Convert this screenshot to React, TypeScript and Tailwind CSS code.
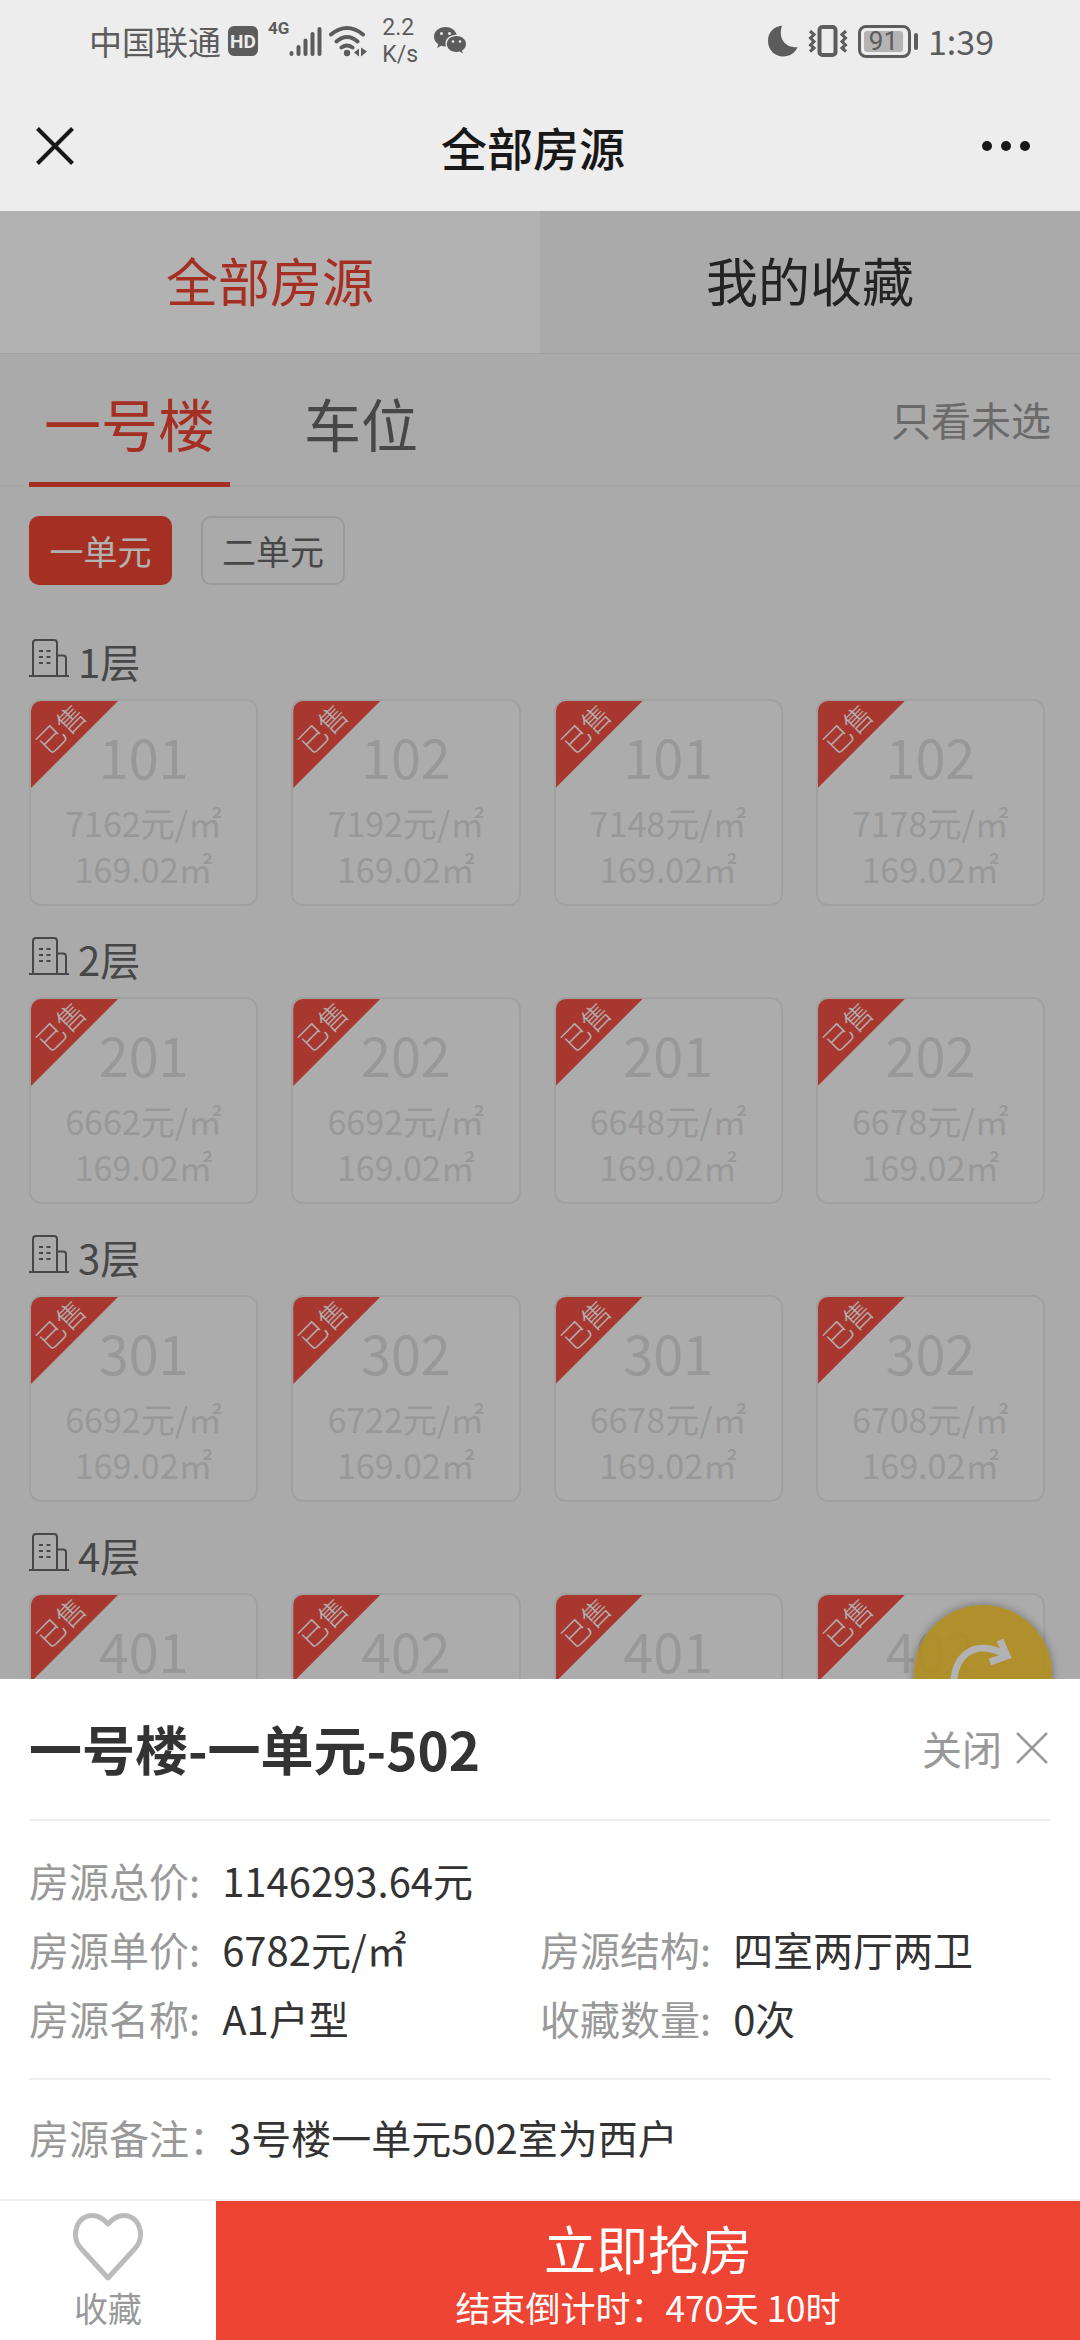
/* 房源选择页：楼层房源列表，遮罩之上弹出单个房源的详情面板。 */

import { useState } from "react";

type Room = { no: string; price: number };

const floors: { name: string; rooms: Room[] }[] = [
  {
    name: "1层",
    rooms: [
      { no: "101", price: 7162 },
      { no: "102", price: 7192 },
      { no: "101", price: 7148 },
      { no: "102", price: 7178 },
    ],
  },
  {
    name: "2层",
    rooms: [
      { no: "201", price: 6662 },
      { no: "202", price: 6692 },
      { no: "201", price: 6648 },
      { no: "202", price: 6678 },
    ],
  },
  {
    name: "3层",
    rooms: [
      { no: "301", price: 6692 },
      { no: "302", price: 6722 },
      { no: "301", price: 6678 },
      { no: "302", price: 6708 },
    ],
  },
  {
    name: "4层",
    rooms: [
      { no: "401", price: 6722 },
      { no: "402", price: 6752 },
      { no: "401", price: 6708 },
      { no: "402", price: 6738 },
    ],
  },
];

function StatusBar() {
  return (
    <div className="flex h-[86px] items-center justify-between pr-[86px] pb-[4px] pl-[89px] text-[#5c5c5c]">
      <div className="flex items-center">
        <span className="text-[33px] leading-[48px]">中国联通</span>
        <span className="ml-[7px] flex h-[30px] w-[30px] items-center justify-center rounded-[6px] bg-[#5c5c5c] font-['Roboto'] text-[19px] leading-none font-bold text-[#ededed]">
          HD
        </span>
        <span className="ml-[10px] self-start pt-[4px] font-['Roboto'] text-[17px] leading-[20px] font-bold">
          4G
        </span>
        <svg viewBox="0 0 34 32" className="h-[32px] w-[34px]" stroke="currentColor" strokeWidth="4" strokeLinecap="round">
          <path d="M2.5 28v1M9.500 22v7M16.500 15.500v13.500M23.500 9v20M30.500 4v25" />
        </svg>
        <svg viewBox="0 0 40 32" className="ml-[6px] h-[32px] w-[40px]" fill="none" stroke="currentColor" strokeWidth="4" strokeLinecap="round">
          <path d="M2 9.500Q18 -3.500 34 9.500M7.500 16.500Q18 7.500 28.500 16.500M12.500 22.500Q18 18.500 23.500 22.500" />
          <circle cx="18" cy="28" r="3.200" fill="currentColor" stroke="none" />
          <path d="M25 27.500l5-4v8zM32 22.500l6 4-6 5z" fill="currentColor" stroke="none" />
        </svg>
        <span className="ml-[13px] font-['Roboto'] text-[23px] leading-[27px]">
          2.2
          <br />
          K/s
        </span>
        <svg viewBox="0 0 34 28" className="ml-[16px] h-[28px] w-[34px]" fill="currentColor">
          <path d="M11.500 0C5 0 0 4.300 0 9.800c0 3.100 1.700 5.800 4.300 7.500L3.200 21l4-2.200c1.300.4 2.800.6 4.300.6h.5a8 8 0 0 1-.5-2.800c0-5 4.800-8.800 10.500-8.800h.8C21.600 3.200 17 0 11.500 0Z" />
          <path d="M32 17.100c0-4.500-4.400-8-9.600-8-5.400 0-9.600 3.600-9.600 8s4.200 8 9.600 8c1.200 0 2.300-.2 3.300-.5l3.100 2-.8-3c2.500-1.600 4-3.900 4-6.500Z" />
          <g fill="#ededed">
            <circle cx="7.500" cy="6.500" r="1.500" />
            <circle cx="15.500" cy="6.500" r="1.500" />
            <circle cx="19" cy="14.500" r="1.300" />
            <circle cx="26" cy="14.500" r="1.300" />
          </g>
        </svg>
      </div>
      <div className="flex items-center">
        <svg viewBox="0 0 30 32" className="h-[32px] w-[30px]" fill="currentColor">
          <path d="M14 0.500C5 1.500 0 8 0 16c0 9 7 15.500 15 15.500 7 0 12.500-4 14.500-9.500C19 23.500 9.500 15 14 0.500Z" />
        </svg>
        <svg viewBox="0 0 40 32" className="ml-[10px] h-[32px] w-[40px]" fill="none" stroke="currentColor" strokeWidth="3">
          <rect x="11.500" y="2" width="16" height="28" rx="3" strokeWidth="4" />
          <path d="M2 6l4 3.500-3.500 3.500L6 16.500 2.500 20 6 23 2 26.500M38 6l-4 3.500 3.500 3.500L34 16.500l3.500 3.500L34 23l4 3.500" />
        </svg>
        <span className="ml-[10px] flex h-[33px] w-[53px] rounded-[8px] border-3 border-current p-[3px]">
          <span className="flex w-[39px] items-center justify-center rounded-[3px] bg-[#b4b4b4] font-['Roboto'] text-[26px] leading-none">
            91
          </span>
        </span>
        <span className="ml-[3px] h-[17px] w-[4px] rounded-[2px] bg-current" />
        <span className="ml-[10px] text-[34px] leading-[48px]">1:39</span>
      </div>
    </div>
  );
}

function BuildingIcon() {
  return (
    <svg viewBox="0 0 40 38" className="mb-[6px] h-[38px] w-[40px]" fill="none" stroke="#666" strokeWidth="2">
      <path d="M0 37h40M4 37V4q0-3 3-3h18q3 0 3 3v33M28 16.500h6q3 0 3 3V37" />
      <path d="M10 12h4M17.500 12h4M10 18h4M17.500 18h4M10 24h4M17.500 24h4" />
    </svg>
  );
}

function RoomCard({ room }: { room: Room }) {
  return (
    <button
      type="button"
      className="relative flex h-[207px] flex-col items-center overflow-hidden rounded-[12px] border-2 border-[#e6e6e6] bg-[#f7f7f7] pt-[25px] text-[#dadada]"
    >
      <span className="absolute top-0 left-0 h-[87px] w-[87px] bg-[#f15045] [clip-path:polygon(0_0,100%_0,0_100%)]" />
      <span className="absolute top-[10px] left-0 w-[58px] -rotate-45 text-center text-[28px] leading-[34px] font-light text-white">
        已售
      </span>
      <span className="text-[54px] leading-[60px]">{room.no}</span>
      <span className="mt-[14px] text-[34px] leading-[46px]">{room.price}元/㎡</span>
      <span className="text-[34px] leading-[46px]">169.02㎡</span>
    </button>
  );
}

function Field({ label, value }: { label: string; value: string }) {
  return (
    <div className="flex gap-[22px]">
      <dt className="text-[#999]">{label}:</dt>
      <dd>{value}</dd>
    </div>
  );
}

export default function App() {
  const [saved, setSaved] = useState(false);

  return (
    <div className="relative flex h-screen flex-col overflow-hidden bg-[#f4f4f4] font-['Noto_Sans_CJK_SC',sans-serif] text-[#333]">
      <header className="shrink-0 bg-[#ededed]">
        <StatusBar />
        <div className="flex h-[125px] items-center justify-between pr-[50px] pb-[6px] pl-[36px] text-[#181818]">
          <button type="button" aria-label="返回" className="w-[48px]">
            <svg viewBox="0 0 38 38" className="h-[38px] w-[38px]" stroke="currentColor" strokeWidth="4">
              <path d="M1.500 1.500l35 35M36.500 1.500l-35 35" />
            </svg>
          </button>
          <h1 className="text-[46px] leading-[60px] font-medium">全部房源</h1>
          <button type="button" aria-label="更多" className="w-[48px]">
            <svg viewBox="0 0 48 10" className="h-[10px] w-[48px]" fill="currentColor">
              <circle cx="5" cy="5" r="5" />
              <circle cx="24" cy="5" r="5" />
              <circle cx="43" cy="5" r="5" />
            </svg>
          </button>
        </div>
      </header>

      <main className="relative min-h-0 flex-1 overflow-hidden">
        <nav className="grid h-[143px] grid-cols-2 border-b border-[#e8e8e8] text-[52px]">
          <button type="button" className="bg-white pb-[5px] text-[#ee4433]">
            全部房源
          </button>
          <button type="button" className="pb-[5px]">
            我的收藏
          </button>
        </nav>

        <div className="flex h-[133px] justify-between border-b-2 border-[#eee] px-[29px]">
          <div className="flex gap-[59px] text-[57px] leading-[84px]">
            <button type="button" className="-mb-[2px] border-b-5 border-[#ee4433] px-[15px] pt-[8px] text-[#ee4433]">
              一号楼
            </button>
            <button type="button" className="px-[15px] pt-[5px] text-[#666]">
              车位
            </button>
          </div>
          <button type="button" className="pb-[2px] text-[40px] text-[#999]">
            只看未选
          </button>
        </div>

        <div className="flex gap-[29px] px-[29px] pt-[29px] text-[34px]">
          <button type="button" className="h-[69px] w-[143px] rounded-[10px] bg-[#ee4433] text-white">
            一单元
          </button>
          <button type="button" className="h-[69px] w-[144px] rounded-[10px] border-2 border-[#dcdcdc] text-[#666]">
            二单元
          </button>
        </div>

        <div className="pt-[23px]">
          {floors.map((floor) => (
            <section key={floor.name} className="pr-[35px] pl-[29px]">
              <h2 className="flex h-[91px] items-center gap-[9px] pt-[14px] text-[40px] leading-[60px] text-[#666]">
                <BuildingIcon />
                {floor.name}
              </h2>
              <div className="grid grid-cols-4 gap-[33px]">
                {floor.rooms.map((room, i) => (
                  <RoomCard key={i} room={room} />
                ))}
              </div>
            </section>
          ))}
        </div>

        <button
          type="button"
          aria-label="刷新"
          className="absolute right-[28px] bottom-[597px] h-[138px] w-[138px] rounded-full bg-[#fbcb35]/95 shadow-[0_0_10px_rgba(0,0,0,0.35)]"
        >
          <svg viewBox="0 0 138 138" fill="none" stroke="#fff" strokeWidth="7">
            <path d="M40 82C38 52 60 32 92 50M86 35L93 51 76 57" />
          </svg>
        </button>
      </main>

      <div className="absolute inset-x-0 top-[211px] bottom-0 bg-black/30" />

      <div role="dialog" aria-labelledby="room-title" className="absolute inset-x-0 bottom-0 bg-white">
        <div className="px-[29px]">
          <div className="flex h-[142px] items-center justify-between border-b-2 border-[#eee] pb-[3px]">
            <h2 id="room-title" className="text-[53px] leading-[72px] font-bold">
              一号楼-一单元-502
            </h2>
            <button type="button" className="flex items-center gap-[14px] pr-[3px] text-[40px] leading-[60px] text-[#999]">
              关闭
              <svg viewBox="0 0 32 32" className="h-[32px] w-[32px]" stroke="currentColor" strokeWidth="2.500">
                <path d="M1 1l30 30M31 1L1 31" />
              </svg>
            </button>
          </div>
          <dl className="grid grid-cols-2 border-b-2 border-[#eee] pt-[25px] pb-[25px] text-[40px] leading-[69px]">
            <div className="col-span-2">
              <Field label="房源总价" value="1146293.64元" />
            </div>
            <Field label="房源单价" value="6782元/㎡" />
            <Field label="房源结构" value="四室两厅两卫" />
            <Field label="房源名称" value="A1户型" />
            <Field label="收藏数量" value="0次" />
          </dl>
          <p className="h-[119px] text-[40px] leading-[115px]">
            <span className="text-[#999]">房源备注：</span>3号楼一单元502室为西户
          </p>
        </div>
        <div className="grid h-[141px] grid-cols-5 border-t-2 border-[#eee]">
          <button
            type="button"
            aria-pressed={saved}
            onClick={() => setSaved(!saved)}
            className="flex flex-col items-center pt-[12px] text-[34px] leading-[44px] text-[#999]"
          >
            <svg
              viewBox="0 0 70 68"
              className="mb-[5px] h-[68px] w-[70px]"
              fill={saved ? "#ee4433" : "none"}
              stroke="#bbb"
              strokeWidth="5"
              strokeLinejoin="round"
            >
              <path d="M35 11C29 4 24 2.500 19 2.500 9 2.500 2.500 11 2.500 22c0 6 2 10 6 14L35 65l26.500-29c4-4 6-8 6-14C67.500 11 61 2.500 51 2.500 46 2.500 41 4 35 11Z" />
            </svg>
            收藏
          </button>
          <button type="button" className="col-span-4 bg-[#ee4433] pt-[2px] text-white">
            <span className="block text-[52px] leading-[70px]">立即抢房</span>
            <span className="block text-[35px] leading-[48px]">结束倒计时：470天 10时</span>
          </button>
        </div>
      </div>
    </div>
  );
}
